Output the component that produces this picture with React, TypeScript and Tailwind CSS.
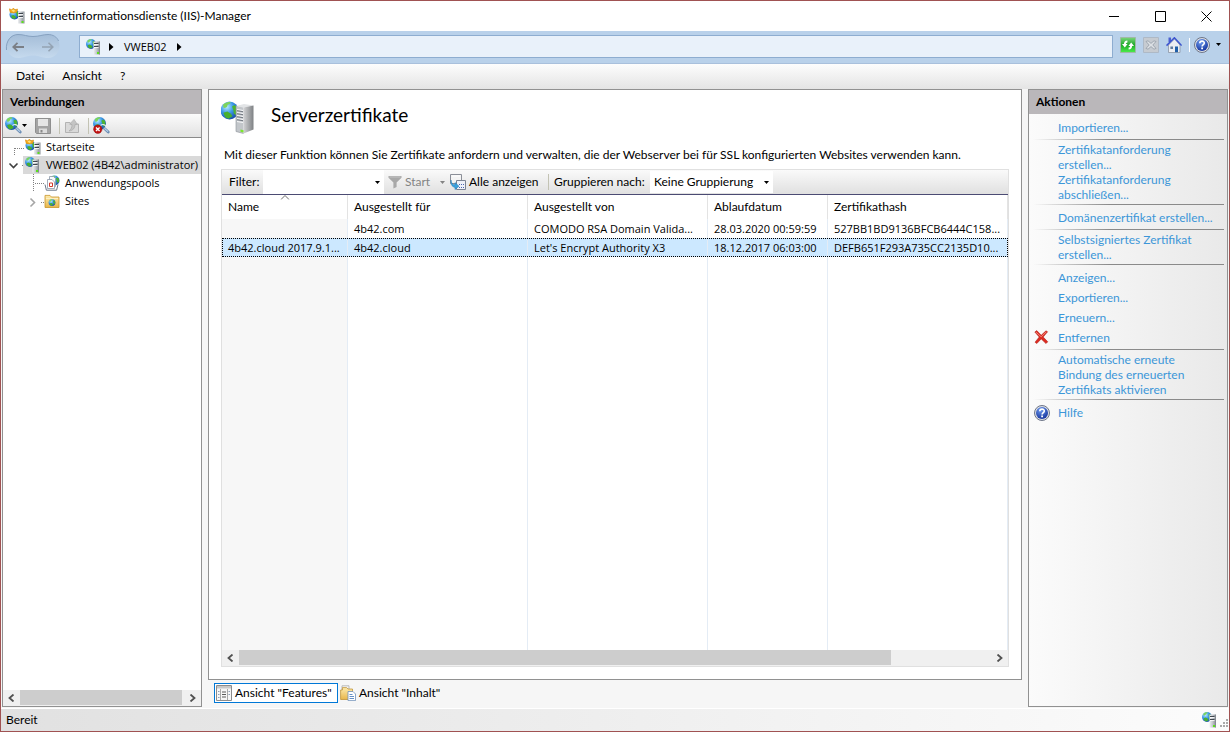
import { useState } from 'react';
import clsx from 'clsx';

type IconProps = { className?: string };

type Certificate = {
  name: string;
  issuedTo: string;
  issuedBy: string;
  expires: string;
  hash: string;
};

type Action = { label: string; icon?: React.ComponentType<IconProps> };

const certificates: Certificate[] = [
  {
    name: '',
    issuedTo: '4b42.com',
    issuedBy: 'COMODO RSA Domain Valida...',
    expires: '28.03.2020 00:59:59',
    hash: '527BB1BD9136BFCB6444C158...',
  },
  {
    name: '4b42.cloud 2017.9.1...',
    issuedTo: '4b42.cloud',
    issuedBy: "Let's Encrypt Authority X3",
    expires: '18.12.2017 06:03:00',
    hash: 'DEFB651F293A735CC2135D10...',
  },
];

const columns = ['Name', 'Ausgestellt für', 'Ausgestellt von', 'Ablaufdatum', 'Zertifikathash'];

// Shared gradients, referenced by id from every icon
const Gradients = () => (
  <svg className="absolute w-0 h-0" aria-hidden="true">
    <defs>
      <radialGradient id="globe" cx="0.35" cy="0.3" r="0.8">
        <stop offset="0" stopColor="#b8ecff" />
        <stop offset="0.45" stopColor="#3c98e8" />
        <stop offset="1" stopColor="#123f9c" />
      </radialGradient>
      <linearGradient id="tower" x1="0" x2="1">
        <stop offset="0" stopColor="#eef0f2" />
        <stop offset="0.5" stopColor="#c4c8cd" />
        <stop offset="1" stopColor="#8d9299" />
      </linearGradient>
      <linearGradient id="side" x1="0" x2="1">
        <stop offset="0" stopColor="#d2d3d5" />
        <stop offset="1" stopColor="#7e8184" />
      </linearGradient>
      <linearGradient id="folder" x1="0" x2="0" y1="0" y2="1">
        <stop offset="0" stopColor="#fdebad" />
        <stop offset="1" stopColor="#e8b64a" />
      </linearGradient>
      <linearGradient id="green" x1="0" x2="0" y1="0" y2="1">
        <stop offset="0" stopColor="#7bd67b" />
        <stop offset="0.5" stopColor="#1fa82a" />
        <stop offset="1" stopColor="#4cf04c" />
      </linearGradient>
      <radialGradient id="help" cx="0.4" cy="0.25" r="0.8">
        <stop offset="0" stopColor="#6f9cf0" />
        <stop offset="1" stopColor="#12309a" />
      </radialGradient>
      <linearGradient id="pill" x1="0" x2="0" y1="0" y2="1">
        <stop offset="0" stopColor="#a4bdd8" />
        <stop offset="0.4" stopColor="#b1c8e0" />
        <stop offset="1" stopColor="#c6daee" />
      </linearGradient>
    </defs>
  </svg>
);

const Globe = ({ cx, cy, r }: { cx: number; cy: number; r: number }) => (
  <g transform={`translate(${cx} ${cy}) scale(${r / 5})`}>
    <circle r="5" fill="url(#globe)" />
    <path d="M-3.6-3.2C-2.4-4.6-.6-4.9.6-4.7L.2-3.6-1-3.2-1.4-2-2.6-1.4-3.4-1.6Z" fill="#7ed45c" />
    <path d="M1.4-2.2 2.8-3 4.2-2 4.6.6 3.6 2.6 2.4 1.6 2.2 0Z" fill="#4db432" />
    <path d="M-3.4 1.2-1.2.6.8 1.8 1.6 3.2-.6 4.6-2.4 3.8Z" fill="#48b02e" />
  </g>
);

const ServerIcon = ({ className = 'w-4 h-4' }: IconProps) => (
  <svg viewBox="0 0 16 16" className={clsx('shrink-0', className)}>
    <Globe cx={5} cy={5} r={5} />
    <path d="M7.5 2.5H13.5V15.5H7.5Z" fill="url(#tower)" />
    <path d="M13 2.5H14V15.5H13Z" fill="#858b92" />
    <path d="M8 4.5H12.5M8 7.5H12.5" stroke="#3f464e" strokeWidth="1" />
    <path d="M8 5.5H12.5M8 8.5H12.5" stroke="#fff" strokeWidth="0.8" />
    <path d="M11 13H13V15H11Z" fill="#5be01c" />
  </svg>
);

const HomeServerIcon = ({ className = 'w-4 h-4' }: IconProps) => (
  <svg viewBox="0 0 16 16" className={clsx('shrink-0', className)}>
    <Globe cx={5.5} cy={6.5} r={5} />
    <path d="M.3.8 2.8 1.8 4.4 0 5.8 1.8 8.6 1 7.8 4.2 4.6 5 1.2 4.4Z" fill="#f5a81c" stroke="#d98808" strokeWidth="0.5" />
    <path d="M2.4 2.6 4.4 1.6 6.4 3 4.4 4Z" fill="#ffe27a" />
    <path d="M9 3.5H14.5V15.5H9Z" fill="url(#tower)" />
    <path d="M14.5 3.5H15.5V15.5H14.5Z" fill="#858b92" />
    <path d="M9.5 5.5H14M9.5 8.5H14" stroke="#3f464e" strokeWidth="1" />
    <path d="M9.5 6.5H14M9.5 9.5H14" stroke="#fff" strokeWidth="0.8" />
    <path d="M12.5 13H14.5V15H12.5Z" fill="#5be01c" />
  </svg>
);

const BigServerIcon = () => (
  <svg viewBox="0 0 36 36" className="w-9 h-9 shrink-0">
    <Globe cx={8.5} cy={12.5} r={9} />
    <path d="M15 8 23 6 32.5 7.5 22.5 9.5Z" fill="#e2e4e6" />
    <path d="M15 8 22.5 9.5V35.5L15 33.5Z" fill="#c2c6ca" />
    <path d="M22.5 9.5 32.5 7.5V31.5L22.5 35.5Z" fill="url(#side)" />
    <path d="M16 11.5 22 12.5M16 14.5 22 15.5M16 17.5 22 18.5M16 20.5 22 21.5M16 23.5 22 24.5" stroke="#f8f9fa" strokeWidth="1.2" />
    <path d="M16 12.7 22 13.7M16 15.7 22 16.7M16 18.7 22 19.7M16 21.7 22 22.7" stroke="#6a7179" strokeWidth="0.9" />
    <path d="M15 8V33.5L22.5 35.5" fill="none" stroke="#8b9197" strokeWidth="0.6" />
    <path d="M19.5 31.4 22.5 32.2V34.6L19.5 33.8Z" fill="#7be82a" />
  </svg>
);

const SearchGlobeIcon = ({ error = false }: { error?: boolean }) => (
  <svg viewBox="0 0 17 17" className="w-[17px] h-[17px] shrink-0">
    <Globe cx={6.5} cy={6.5} r={6.5} />
    <path d="M7.5 8.5A3.4 3.4 0 0 1 13 9.5" fill="none" stroke="#dfe9f2" strokeWidth="1.2" />
    <path d="M11.5 11.5 15.2 15" stroke="#6b8db4" strokeWidth="2.8" strokeLinecap="round" />
    <path d="M11.4 11.2 15 14.6" stroke="#b9d2ea" strokeWidth="1.2" />
    {error && (
      <g>
        <circle cx="4.8" cy="12.2" r="4.2" fill="#c41414" stroke="#8f0d0d" strokeWidth="0.5" />
        <path d="M3 10.4 6.6 14M6.6 10.4 3 14" stroke="#fff" strokeWidth="1.4" />
      </g>
    )}
  </svg>
);

const SaveIcon = () => (
  <svg viewBox="0 0 16 16" className="w-4 h-4">
    <path d="M.5.5H15.5V15.5H1.5L.5 14.5Z" fill="#a4a4a4" stroke="#8f8f8f" />
    <path d="M3 1H13V8H3Z" fill="#e6e6e6" />
    <path d="M4 10.5H12V15H4Z" fill="#dcdcdc" />
    <path d="M5.5 12H7.5V14.5H5.5Z" fill="#8a8a8a" />
  </svg>
);

const UpIcon = () => (
  <svg viewBox="0 0 16 16" className="w-4 h-4">
    <path d="M1.5 4.5H6L7 6H14.5V14.5H1.5Z" fill="#d9d9d9" stroke="#b3b3b3" />
    <path d="M5 13C7 11.5 8 9.5 8 6.5L5.6 6.2 10 1.4 13.4 6.4H11C11 10 9 12.6 5 13Z" fill="#c4c4c4" stroke="#a5a5a5" strokeWidth="0.6" />
  </svg>
);

const PoolsIcon = () => (
  <svg viewBox="0 0 16 16" className="w-4 h-4 shrink-0">
    <Globe cx={10.5} cy={5.5} r={5} />
    <path d="M5.5 1.5H9.5L11.5 3.5V11.5H5.5Z" fill="#f8fafc" stroke="#8c98a8" strokeWidth="0.8" />
    <path d="M3.5 4.5H8L10.5 7V13.5H3.5Z" fill="#fff" stroke="#8c98a8" strokeWidth="0.8" />
    <path d="M5.5 8H8.5V11.5H5.5Z" fill="none" stroke="#d23a2e" strokeWidth="1" />
    <path d="M1 9.5 2.4 15.2H12.6L14 9.5" fill="none" stroke="#6b7888" strokeWidth="1" />
  </svg>
);

const SitesIcon = () => (
  <svg viewBox="0 0 16 16" className="w-4 h-4 shrink-0">
    <path d="M1 2.4H6L7.4 4H15V14.5H1Z" fill="url(#folder)" stroke="#c9962c" strokeWidth="0.8" />
    <path d="M2 5.6H14" stroke="#fff6d6" strokeWidth="0.8" />
    <Globe cx={8} cy={9.6} r={3.4} />
  </svg>
);

const HelpIcon = ({ className = 'w-4 h-4' }: IconProps) => (
  <svg viewBox="0 0 16 16" className={clsx('shrink-0', className)}>
    <circle cx="8" cy="8" r="7.5" fill="#dcdfe6" stroke="#6e7688" strokeWidth="1" />
    <circle cx="8" cy="8" r="6" fill="url(#help)" />
    <path d="M5.8 6.3C5.8 3.4 10.3 3.5 10.3 6.1 10.3 7.7 8.1 7.8 8.1 9.6" fill="none" stroke="#fff" strokeWidth="1.6" />
    <path d="M7.2 10.6H9V12.3H7.2Z" fill="#fff" />
  </svg>
);

const RemoveIcon = ({ className = 'w-4 h-4' }: IconProps) => (
  <svg viewBox="0 0 16 16" className={clsx('shrink-0', className)}>
    <path d="M.8 2 2.8.6 7.2 5.2 12 .8 13.6 1.8 9.2 7 13.8 11.8 12 13.6 7.2 8.9 2.8 13.6 1 12.2 5.2 7Z" fill="#dc2a20" stroke="#a81c14" strokeWidth="0.5" />
    <path d="M2 2.2 7.2 6.8 12.2 2" fill="none" stroke="#f58a7e" strokeWidth="0.9" />
  </svg>
);

const RefreshIcon = () => (
  <svg viewBox="0 0 16 16" className="w-4 h-4">
    <path d="M.5.5H15.5V15.5H.5Z" fill="url(#green)" stroke="#9fb9a6" />
    <path d="M7.4 3.4C5 3.6 4 4.8 3.9 7H2L4.8 10.6 7.6 7H5.9C6 6 6.4 5.5 7.4 5.4Z" fill="#fff" />
    <path d="M8.6 12.6C11 12.4 12 11.2 12.1 9H14L11.2 5.4 8.4 9H10.1C10 10 9.6 10.5 8.6 10.6Z" fill="#fff" />
  </svg>
);

const StopIcon = () => (
  <svg viewBox="0 0 16 16" className="w-4 h-4">
    <path d="M.5.5H15.5V15.5H.5Z" fill="#c6cbd1" stroke="#aeb9c6" />
    <path d="M3 4.5 5 3.8 8 6.4 11 3.8 13 4.5 9.8 8 13 11.4 11 12.2 8 9.6 5 12.2 3 11.4 6.2 8Z" fill="#dde1e5" stroke="#929ba6" strokeWidth="0.8" />
  </svg>
);

const HomeIcon = () => (
  <svg viewBox="0 0 16 16" className="w-4 h-4">
    <path d="M2.5 .5H5V5H2.5Z" fill="#4a5fd0" />
    <path d="M2.5 8 8.5 2 14 8V15.5H2.5Z" fill="#eceef2" stroke="#8b95a5" strokeWidth="0.8" />
    <path d="M.5 8.6 8.4.8 15.6 8.6" fill="none" stroke="#3c54cf" strokeWidth="1.5" />
    <path d="M9 9.5H12V15.2H9Z" fill="#1f5fa8" />
    <path d="M4.4 9.5H7V12H4.4Z" fill="#5f7b9c" />
  </svg>
);

const FunnelIcon = () => (
  <svg viewBox="0 0 14 14" className="w-[14px] h-[14px]">
    <path d="M.5 1H13.5V2.8L8.6 7.6V12L5.4 13.4V7.6L.5 2.8Z" fill="#a8a8a8" />
    <path d="M1.5 2H12.5" stroke="#c4c4c4" />
  </svg>
);

const ShowAllIcon = () => (
  <svg viewBox="0 0 16 16" className="w-4 h-4">
    <path d="M.5.5H11.5V9.5H.5Z" fill="#f4f4f4" stroke="#8b8f98" />
    <path d="M2 2H10" stroke="#fff" />
    <path d="M6.5 6.5H15.5V15.5H6.5Z" fill="#eef1f8" stroke="#7b8494" />
    <path d="M9 10.5H10M11 10.5H12M13 10.5H14M9 13.5H10M11 13.5H12M13 13.5H14" stroke="#4a64b0" strokeWidth="1.2" />
    <path d="M1 6C1.2 9 2.4 10.6 5 10.8V8.6L9 12.2 5 15.6V13.4C1.6 12.8.4 9.6 1 6Z" fill="#3ba0dc" stroke="#1e78b4" strokeWidth="0.5" />
  </svg>
);

const FeaturesIcon = () => (
  <svg viewBox="0 0 16 16" className="w-4 h-4">
    <path d="M.5.5H15.5V15.5H.5Z" fill="#f6f6f6" stroke="#8c8c8c" />
    <path d="M1 1H15V3.5H1Z" fill="#c8c8c8" />
    <path d="M4.5 4V15M11.5 4V15" stroke="#a8a8a8" />
    <path d="M2 6.5H3.5M2 9.5H3.5M2 12.5H3.5M12.5 6.5H14M12.5 9.5H14" stroke="#8fa0b8" />
    <path d="M6 7H10M6 9.5H10M6 12H10" stroke="#5a5a5a" />
  </svg>
);

const ContentIcon = () => (
  <svg viewBox="0 0 16 16" className="w-4 h-4">
    <path d="M2 .8H9V8H2Z" fill="#f4f4f4" stroke="#a5a5a5" strokeWidth="0.7" />
    <path d="M.6 5H2.4V2.6H6.6L8 4H12.5V14.5H.6Z" fill="url(#folder)" stroke="#b98a2a" strokeWidth="0.7" />
    <path d="M8 6.5H13L15.5 9V15.6H8Z" fill="#fff" stroke="#6f8fb8" strokeWidth="0.8" />
    <path d="M9.5 9.5H12.5M9.5 11.5H14M9.5 13.5H14" stroke="#3f74b8" strokeWidth="0.8" />
  </svg>
);

const ArrowDown = ({ className = 'text-black' }: IconProps) => (
  <svg viewBox="0 0 5 3" className={clsx('w-[5px] h-[3px] shrink-0', className)}>
    <path d="M0 0H5L2.5 3Z" fill="currentColor" />
  </svg>
);

const ArrowRight = () => (
  <svg viewBox="0 0 5 8" className="w-[5px] h-2 shrink-0">
    <path d="M0 0 4.5 4 0 8Z" fill="#000" />
  </svg>
);

const Chevron = ({ className }: IconProps) => (
  <svg viewBox="0 0 8 8" className={clsx('w-2 h-2', className)}>
    <path d="M1.5.5 5.5 4 1.5 7.5" fill="none" stroke="currentColor" strokeWidth="1.8" />
  </svg>
);

const Separator = () => <span className="w-px h-4 shrink-0 bg-[#c3c3b4]" />;

const ScrollBar = ({ thumb }: { thumb: string }) => (
  <div className="flex h-4 shrink-0 bg-[#f0f0f0] text-[#505050]">
    <button aria-label="Nach links" className="w-[17px] flex items-center justify-center pr-0.5">
      <Chevron className="rotate-180" />
    </button>
    <div className="flex-1">
      <div className={clsx('h-[15px] bg-[#cdcdcd]', thumb)} />
    </div>
    <button aria-label="Nach rechts" className="w-[17px] flex items-center justify-center">
      <Chevron />
    </button>
  </div>
);

const actionGroups: Action[][] = [
  [{ label: 'Importieren...' }],
  [{ label: 'Zertifikatanforderung\nerstellen...' }, { label: 'Zertifikatanforderung\nabschließen...' }],
  [{ label: 'Domänenzertifikat erstellen...' }],
  [{ label: 'Selbstsigniertes Zertifikat\nerstellen...' }],
  [
    { label: 'Anzeigen...' },
    { label: 'Exportieren...' },
    { label: 'Erneuern...' },
    { label: 'Entfernen', icon: RemoveIcon },
  ],
  [{ label: 'Automatische erneute\nBindung des erneuerten\nZertifikats aktivieren' }],
  [{ label: 'Hilfe', icon: HelpIcon }],
];

const isMultiline = (label: string) => label.includes('\n');

const TitleBar = () => (
  <header className="flex h-[30px] shrink-0 items-center bg-white pl-2">
    <HomeServerIcon />
    <h1 className="ml-[5px] flex-1 whitespace-nowrap">Internetinformationsdienste (IIS)-Manager</h1>
    <button aria-label="Minimieren" className="w-[46px] h-full flex items-center justify-center">
      <svg viewBox="0 0 11 11" className="w-[11px] h-[11px]"><path d="M0 5.5H10" stroke="#000" /></svg>
    </button>
    <button aria-label="Maximieren" className="w-[46px] h-full flex items-center justify-center">
      <svg viewBox="0 0 11 11" className="w-[11px] h-[11px]"><path d="M.5.5H10.5V10.5H.5Z" fill="none" stroke="#000" /></svg>
    </button>
    <button aria-label="Schließen" className="w-[46px] h-full flex items-center justify-center">
      <svg viewBox="0 0 11 11" className="w-[11px] h-[11px]"><path d="M.5.5 10.5 10.5M10.5.5.5 10.5" stroke="#000" /></svg>
    </button>
  </header>
);

const AddressBar = () => (
  <div className="flex h-[33px] shrink-0 items-center border-b border-[#a9c0dc] bg-[#b9d1ea] pb-px pl-1 pr-2">
    <div className="relative flex h-[27px] w-14 items-center">
      <svg viewBox="0 0 56 27" className="absolute inset-0 w-14 h-[27px]">
        <path d="M13 1.5C19 1.5 22 3.5 28 3.5S38 1.5 43 1.5C50 1.5 54.5 7 54.5 13S50 25 43 25C37 25 34 22.5 28 22.5S19 25 13 25C6 25 1.5 19 1.5 13S6 1.5 13 1.5Z" fill="url(#pill)" />
        <path d="M1.5 17C.5 8 6 1.5 13 1.5 19 1.5 22 3.5 28 3.5S38 1.5 43 1.5C48 1.5 52 4 53.5 8" fill="none" stroke="#86a1c0" />
      </svg>
      <button aria-label="Zurück" className="relative flex flex-1 justify-center pr-1 text-[#7b7f86]">
        <svg viewBox="0 0 12 10" className="w-3 h-[10px]"><path d="M5.5.8 1.2 5 5.5 9.2M1.2 5H12" fill="none" stroke="currentColor" strokeWidth="1.8" /></svg>
      </button>
      <button aria-label="Vorwärts" className="relative flex flex-1 justify-center text-[#94a3b3]">
        <svg viewBox="0 0 12 10" className="w-3 h-[10px]"><path d="M6.5.8 10.8 5 6.5 9.2M10.8 5H0" fill="none" stroke="currentColor" strokeWidth="1.6" /></svg>
      </button>
    </div>
    <nav className="ml-[18px] mr-[7px] flex h-[23px] flex-1 items-center border border-[#8eadd0] bg-[#e9f1fa] pl-1.5">
      <ServerIcon />
      <span className="ml-[7px]"><ArrowRight /></span>
      <button className="mx-2.5 font-['Open_Sans',sans-serif] text-[11px]">VWEB02</button>
      <ArrowRight />
    </nav>
    <div className="flex items-center pb-1">
      <button aria-label="Aktualisieren"><RefreshIcon /></button>
      <button aria-label="Anhalten" className="ml-[7px]"><StopIcon /></button>
      <button aria-label="Startseite" className="ml-[7px]"><HomeIcon /></button>
      <span className="ml-[7px] mr-1 h-[14px] w-px bg-white" />
      <button aria-label="Hilfe" className="flex items-center gap-1.5">
        <HelpIcon />
        <ArrowDown />
      </button>
    </div>
  </div>
);

const Connections = () => (
  <aside className="flex min-h-0 flex-col border border-[#919191] bg-white">
    <h2 className="h-6 shrink-0 bg-[#bab7ba] pl-[7px] font-bold leading-6">Verbindungen</h2>
    <div className="flex h-6 shrink-0 items-center border-b border-[#8a8a8a] bg-linear-to-b from-[#fbfbfb] to-[#e2e2e2] pl-0.5">
      <button aria-label="Verbinden" className="flex items-center">
        <SearchGlobeIcon />
        <ArrowDown />
      </button>
      <button aria-label="Speichern" disabled className="ml-2 mr-2"><SaveIcon /></button>
      <Separator />
      <button aria-label="Nach oben" disabled className="ml-1 mr-2"><UpIcon /></button>
      <Separator />
      <button aria-label="Trennen" className="ml-1"><SearchGlobeIcon error /></button>
    </div>
    <ul className="min-h-0 flex-1 overflow-hidden whitespace-nowrap font-['Open_Sans',sans-serif] text-[11px] leading-[18px]">
      <li className="flex items-center">
        <svg viewBox="0 0 22 18" className="w-[22px] h-[18px] shrink-0">
          <path d="M12 10.5H22M11.5 10V18" stroke="#808080" strokeDasharray="1 1" fill="none" />
        </svg>
        <HomeServerIcon />
        <span className="ml-[5px]">Startseite</span>
      </li>
      <li className="flex items-center">
        <svg viewBox="0 0 20 18" className="w-5 h-[18px] shrink-0">
          <path d="M6.5 7.5 10.5 11.5 14.5 7.5" stroke="#404040" strokeWidth="1.6" fill="none" />
          <path d="M19.5 9V10" stroke="#808080" />
        </svg>
        <span className="flex flex-1 items-center bg-[#d9d9d9] pl-0.5">
          <ServerIcon />
          <span className="ml-[5px]">VWEB02 (4B42\administrator)</span>
        </span>
      </li>
      <li className="flex items-center">
        <svg viewBox="0 0 41 18" className="w-[41px] h-[18px] shrink-0">
          <path d="M30.5 0V18M32 9.5H41" stroke="#808080" strokeDasharray="1 1" fill="none" />
        </svg>
        <PoolsIcon />
        <span className="ml-[5px]">Anwendungspools</span>
      </li>
      <li className="flex items-center">
        <svg viewBox="0 0 41 18" className="w-[41px] h-[18px] shrink-0">
          <path d="M27.5 6.5 31.5 10.5 27.5 14.5" stroke="#a6a6a6" strokeWidth="1.6" fill="none" />
          <path d="M38 10.5H41" stroke="#808080" strokeDasharray="1 1" fill="none" />
        </svg>
        <SitesIcon />
        <span className="ml-[5px]">Sites</span>
      </li>
    </ul>
    <ScrollBar thumb="w-[99%]" />
  </aside>
);

const FilterBar = () => (
  <div className="flex h-[25px] shrink-0 items-center whitespace-nowrap border-b border-[#4b4b73] bg-linear-to-b from-[#fafafa] to-[#e0e0e0]">
    <label htmlFor="filter" className="w-[41px] shrink-0 pl-[7px]">Filter:</label>
    <div className="flex h-full w-[121px] shrink-0 items-center bg-white pr-1">
      <input id="filter" type="text" className="h-full min-w-0 flex-1 px-1 outline-none" />
      <ArrowDown />
    </div>
    <button disabled className="flex w-[61px] shrink-0 items-center gap-[3px] pl-1 text-[#838383]">
      <FunnelIcon />
      <span className="flex-1 text-left">Start</span>
      <ArrowDown className="text-[#838383]" />
    </button>
    <button className="ml-[5px] flex w-[98px] shrink-0 items-center gap-[3px]">
      <ShowAllIcon />
      Alle anzeigen
    </button>
    <Separator />
    <label htmlFor="grouping" className="w-[101px] shrink-0 pl-[5px]">Gruppieren nach:</label>
    <div className="relative flex h-[22px] w-[123px] shrink-0 items-center bg-white">
      <select id="grouping" className="h-full w-full appearance-none pl-1 outline-none">
        <option>Keine Gruppierung</option>
      </select>
      <span className="pointer-events-none absolute inset-y-0 right-1 flex items-center"><ArrowDown /></span>
    </div>
  </div>
);

const CertificateTable = () => {
  const [selected, setSelected] = useState(1);

  return (
    <table className="h-full w-full table-fixed border-separate border-spacing-0 text-left">
      <colgroup>
        <col className="w-[126px]" />
        <col className="w-[180px]" />
        <col className="w-[180px]" />
        <col className="w-[120px]" />
        <col />
      </colgroup>
      <thead>
        <tr className="h-6">
          {columns.map((column, i) => (
            <th key={column} className="relative border-r border-[#e3e3e3] bg-white p-0 pl-1.5 font-normal">
              {column}
              {i === 0 && (
                <svg viewBox="0 0 9 5" className="absolute left-1/2 top-0 w-[9px] h-[5px] -translate-x-1/2">
                  <path d="M.5 4.5 4.5.5 8.5 4.5" fill="none" stroke="#707070" />
                </svg>
              )}
            </th>
          ))}
        </tr>
      </thead>
      <tbody className="font-['Open_Sans',sans-serif] text-[11px]">
        {certificates.map((cert, i) => (
          <tr
            key={cert.hash}
            onClick={() => setSelected(i)}
            className={clsx('h-[19px]', i === selected && 'bg-[#cce8ff] outline-1 -outline-offset-1 outline-dotted outline-black')}
          >
            {[cert.name, cert.issuedTo, cert.issuedBy, cert.expires, cert.hash].map((value, c) => (
              <td
                key={c}
                className={clsx(
                  'whitespace-nowrap border-r border-[#e4ecf5] p-0 pl-1.5 leading-[18px]',
                  c === 0 && i !== selected && 'bg-[#f7f7f7]',
                )}
              >
                {value}
              </td>
            ))}
          </tr>
        ))}
        {/* Empty space below the last certificate */}
        <tr>
          {columns.map((column, c) => (
            <td key={column} className={clsx('border-r border-[#e4ecf5] p-0', c === 0 && 'bg-[#f7f7f7]')} />
          ))}
        </tr>
      </tbody>
    </table>
  );
};

const Actions = () => (
  <aside className="flex min-h-0 flex-col border border-[#919191] bg-linear-to-r from-[#fbfbfb] to-[#e9e9e9]">
    <h2 className="h-6 shrink-0 bg-[#bab7ba] pl-[7px] font-bold leading-6">Aktionen</h2>
    <div className="pt-px pl-1 pr-[3px] text-[#3c96d8]">
      {actionGroups.map((group, i) => (
        <div key={i}>
          {i > 0 && <div className="h-px bg-linear-to-r from-transparent via-[#8a8a8a] via-40% to-[#8a8a8a]" />}
          <ul className={isMultiline(group[0].label) ? 'py-0.5' : 'pt-[3px] pb-px'}>
            {group.map(({ label, icon: Icon }) => (
              <li key={label} className="flex items-center">
                <span className="w-[25px] pl-px">{Icon && <Icon />}</span>
                <a href="#" className={clsx('whitespace-pre', isMultiline(label) ? 'leading-[15px]' : 'leading-5')}>
                  {label}
                </a>
              </li>
            ))}
          </ul>
        </div>
      ))}
    </div>
  </aside>
);

export default function App() {
  return (
    <div className="flex h-screen flex-col overflow-hidden border border-[#a05252] bg-[#f6f6f6] font-[Lato,sans-serif] text-[12px] leading-4 text-black">
      <Gradients />
      <TitleBar />
      <AddressBar />
      <nav className="flex h-[25px] shrink-0 items-center gap-[18px] bg-linear-to-b from-[#fdfdfd] to-[#e4e4e4] pb-0.5 pl-[15px]">
        <button>Datei</button>
        <button>Ansicht</button>
        <button>?</button>
      </nav>

      <div className="grid min-h-0 flex-1 grid-cols-[200px_minmax(0,1fr)_200px] gap-1.5 px-px">
        <Connections />
        <main className="flex min-h-0 flex-col">
          <section className="flex min-h-0 flex-1 flex-col border border-[#919191] bg-white px-3 pb-3 pt-[7px]">
            <div className="flex h-[38px] shrink-0 items-center">
              <BigServerIcon />
              <h2 className="ml-[14px] pb-0.5 text-[19px] leading-6">Serverzertifikate</h2>
            </div>
            <p className="mt-3 shrink-0 whitespace-nowrap pl-[3px]">
              Mit dieser Funktion können Sie Zertifikate anfordern und verwalten, die der Webserver bei für SSL konfigurierten Websites verwenden kann.
            </p>
            <div className="mt-1.5 flex min-h-0 flex-1 flex-col border border-[#e0e0e0]">
              <FilterBar />
              <div className="min-h-0 flex-1">
                <CertificateTable />
              </div>
              <ScrollBar thumb="w-[86.7%]" />
            </div>
          </section>
          <div className="flex h-[27px] shrink-0 items-center gap-0.5 pb-px pl-1.5">
            <button className="flex h-5 w-[124px] items-center gap-[3px] whitespace-nowrap border border-[#0078d7] bg-white pl-px">
              <FeaturesIcon />
              Ansicht "Features"
            </button>
            <button className="flex items-center gap-[3px] whitespace-nowrap">
              <ContentIcon />
              Ansicht "Inhalt"
            </button>
          </div>
        </main>
        <Actions />
      </div>

      <footer className="mt-px flex h-[23px] shrink-0 items-center justify-between border-t border-white bg-linear-to-r from-[#e1e1e1] to-[#fcfcfc] pl-[5px]">
        <span>Bereit</span>
        <span className="flex items-end gap-0.5">
          <ServerIcon />
          <svg viewBox="0 0 9 9" className="w-[9px] h-[9px]">
            <path d="M6 0H8V2H6ZM3 3H5V5H3ZM6 3H8V5H6ZM0 6H2V8H0ZM3 6H5V8H3ZM6 6H8V8H6Z" fill="#a9a9a9" />
          </svg>
        </span>
      </footer>
    </div>
  );
}
